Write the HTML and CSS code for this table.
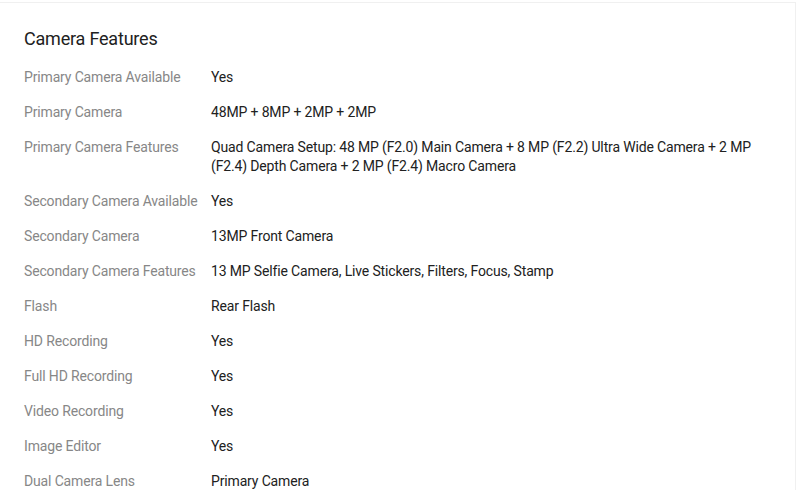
FILE: index.html
```html
<!DOCTYPE html>
<html>
<head>
<meta charset="utf-8">
<link rel="stylesheet" href="styles.css">
</head>
<body>
<div class="card">
  <div class="title">Camera Features</div>
  <table class="specs">
    <tr><td class="label">Primary Camera Available</td><td class="value">Yes</td></tr>
    <tr><td class="label">Primary Camera</td><td class="value">48MP + 8MP + 2MP + 2MP</td></tr>
    <tr><td class="label">Primary Camera Features</td><td class="value">Quad Camera Setup: 48 MP (F2.0) Main Camera + 8 MP (F2.2) Ultra Wide Camera + 2 MP (F2.4) Depth Camera + 2 MP (F2.4) Macro Camera</td></tr>
    <tr><td class="label">Secondary Camera Available</td><td class="value">Yes</td></tr>
    <tr><td class="label">Secondary Camera</td><td class="value">13MP Front Camera</td></tr>
    <tr><td class="label">Secondary Camera Features</td><td class="value">13 MP Selfie Camera, Live Stickers, Filters, Focus, Stamp</td></tr>
    <tr><td class="label">Flash</td><td class="value">Rear Flash</td></tr>
    <tr><td class="label">HD Recording</td><td class="value">Yes</td></tr>
    <tr><td class="label">Full HD Recording</td><td class="value">Yes</td></tr>
    <tr><td class="label">Video Recording</td><td class="value">Yes</td></tr>
    <tr><td class="label">Image Editor</td><td class="value">Yes</td></tr>
    <tr><td class="label">Dual Camera Lens</td><td class="value">Primary Camera</td></tr>
  </table>
</div>
</body>
</html>
```
FILE: styles.css
```css
html, body {
  margin: 0;
  padding: 0;
  background: #ffffff;
}
body {
  font-family: Roboto, "Liberation Sans", Arial, sans-serif;
  color: #212121;
  padding-top: 2px;
}
.card {
  width: 796px;
  box-sizing: border-box;
  border-top: 1px solid #f0f0f0;
  border-right: 1px solid #f0f0f0;
  padding: 24px 24px 0 24px;
}
.title {
  font-size: 18px;
  line-height: 24px;
  color: #212121;
  letter-spacing: -0.2px;
  margin-bottom: 9px;
}
.specs {
  border-collapse: collapse;
  width: 100%;
  font-size: 14px;
  line-height: 19px;
  letter-spacing: -0.15px;
}
.specs td {
  padding: 8px 0;
  vertical-align: top;
}
.label {
  width: 187px;
  color: #878787;
  white-space: nowrap;
}
.value {
  color: #212121;
}
```
